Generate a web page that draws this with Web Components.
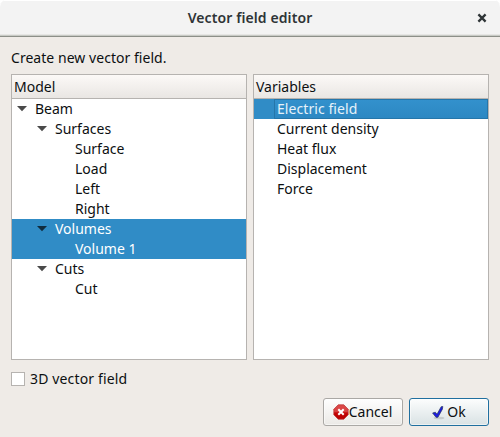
<!DOCTYPE html>
<html lang="en">
<head>
<meta charset="utf-8">
<title>Vector field editor</title>
<style>
html, body { margin: 0; height: 100%; background: #fff; overflow: hidden; }
body { font: 14px/20px "Noto Sans", sans-serif; color: #0c0f11; }
</style>
</head>
<body>
<field-dialog></field-dialog>
<script>
const define = (name, html) => customElements.define(name, class extends HTMLElement {
  constructor() {
    super();
    const t = document.createElement('template');
    t.innerHTML = html;
    this.attachShadow({ mode: 'open' }).append(t.content.cloneNode(true));
  }
});

define('title-bar', `
<style>
:host { display: grid; grid-template-columns: 36px 1fr 36px; align-items: center; height: 37px; box-sizing: border-box;
  border-bottom: 1px solid #8c8f88; border-radius: 7px 7px 0 0;
  background: radial-gradient(circle at 7px 7px, #0000 7px, #aaa 7.6px) 0 0 / 5px 5px no-repeat,
    radial-gradient(circle at -2px 7px, #0000 7px, #aaa 7.6px) 100% 0 / 5px 5px no-repeat,
    linear-gradient(#fff 0 1px, #f3f3f3 1px 34px, #e6e6e4 34px 35px, #c8cac5 35px);
  color: #2e3436; font-weight: 600; letter-spacing: .1px; }
h1 { font: inherit; margin: 0; grid-column: 2; text-align: center; }
svg { display: block; margin-left: 13px; }
</style>
<h1><slot></slot></h1>
<svg width="10" height="10" viewBox="0 0 10 10"><path d="M1.4 1.4 8.6 8.6M8.6 1.4 1.4 8.6" stroke="#2e3436" stroke-width="2.3"/></svg>`);

define('list-panel', `
<style>
:host { display: flex; flex-direction: column; box-sizing: border-box; border: 1px solid #b6b3b0; background: #fff; }
header { height: 23px; line-height: 24px; padding-left: 2px; border-bottom: 1px solid #b6b3b0; background: linear-gradient(#fcf9f7, #e9e6e3); }
</style>
<header><slot name="heading"></slot></header><slot></slot>`);

define('tree-row', `
<style>
:host { display: flex; align-items: center; height: 20px; box-sizing: border-box; padding-left: calc(3px + var(--depth, 0) * 20px); --arrow: #4a4a4a; }
:host([selected]) { background: #308cc6; color: #fff; --arrow: #102c3e; }
:host([focused]) { color: #e6f2fa; }
svg { width: 14px; height: 20px; flex: none; visibility: hidden; }
:host([open]) svg { visibility: visible; }
span { flex: 1; height: 20px; box-sizing: border-box; margin-left: 3px; padding-left: 3px; white-space: pre; }
:host([focused]) span { background: linear-gradient(#3391cd, #2c87c2); box-shadow: inset 0 0 0 1px #2576aa; letter-spacing: .07px; }
</style>
<svg viewBox="0 0 14 20"><path d="M2 7h10L7 12.2z" fill="var(--arrow)"/></svg><span><slot></slot></span>`);

define('check-option', `
<style>
:host { display: flex; align-items: center; gap: 5px; height: 20px; letter-spacing: .14px; }
i { width: 14px; height: 14px; box-sizing: border-box; border: 1px solid #b6b3b0; background: #fff; }
</style>
<i></i><span><slot></slot></span>`);

define('push-button', `
<style>
:host { display: flex; align-items: center; justify-content: center; width: 80px; height: 28px; box-sizing: border-box; padding-right: 1px;
  border: 1px solid #aaa8a5; border-radius: 3px; background: linear-gradient(#fefefe, #ebe9e6); box-shadow: inset 0 0 0 1px #ffffff80; }
:host([primary]) { border-color: #206f9f; background: linear-gradient(#fcfdfd, #d9e2e4); }
</style>
<slot name="icon"></slot><span><slot></slot></span>`);

define('cancel-icon', `
<style>:host, svg { display: block; width: 16px; height: 16px; }</style>
<svg viewBox="0 0 16 16"><defs><linearGradient id="g" x2="0" y2="1"><stop stop-color="#dc4a4a"/><stop offset=".48" stop-color="#d84040"/><stop offset=".56" stop-color="#c40404"/><stop offset="1" stop-color="#b80000"/></linearGradient></defs>
<path d="M5.2.8h5.6L15.2 5.2v5.6L10.8 15.2H5.2L.8 10.8V5.2z" fill="url(#g)" stroke="#b83030" stroke-width=".7" stroke-linejoin="round"/>
<path d="m5.3 5.3 5.4 5.4m0-5.4-5.4 5.4" stroke="#fff" stroke-width="2"/></svg>`);

define('ok-icon', `
<style>:host, svg { display: block; width: 16px; height: 16px; }</style>
<svg viewBox="0 0 16 16"><ellipse cx="8" cy="14" rx="5.4" ry="1.3" fill="#00000020"/>
<path d="M1.6 9 4.3 8.2 6 10.2 10.2 2.7 11.8 2.5 11.4 5.2 6.9 13.3H5z" fill="#1c1ce0" stroke="#25355f" stroke-width=".7" stroke-linejoin="round"/></svg>`);

define('field-dialog', `
<style>
:host { display: flex; flex-direction: column; height: 437px; background: linear-gradient(#fff 0 20px, #efebe7 20px); }
main { flex: 1; display: flex; flex-direction: column; padding: 11px 11px 11px; }
p { margin: 0 0 6px; height: 20px; letter-spacing: .04px; }
.lists { display: grid; grid-template-columns: 236px 236px; gap: 6px; height: 286px; }
check-option { margin-top: 9px; }
footer { display: flex; justify-content: flex-end; gap: 6px; margin-top: 9px; }
</style>
<title-bar>Vector field editor</title-bar>
<main>
<p>Create new vector field.</p>
<div class="lists">
<list-panel><span slot="heading">Model</span>
<tree-row open>Beam</tree-row>
<tree-row open style="--depth:1">Surfaces</tree-row>
<tree-row style="--depth:2">Surface</tree-row>
<tree-row style="--depth:2">Load</tree-row>
<tree-row style="--depth:2">Left</tree-row>
<tree-row style="--depth:2">Right</tree-row>
<tree-row open selected style="--depth:1">Volumes</tree-row>
<tree-row selected style="--depth:2">Volume 1</tree-row>
<tree-row open style="--depth:1">Cuts</tree-row>
<tree-row style="--depth:2">Cut</tree-row>
</list-panel>
<list-panel><span slot="heading">Variables</span>
<tree-row selected focused>Electric field</tree-row>
<tree-row>Current density</tree-row>
<tree-row>Heat flux</tree-row>
<tree-row>Displacement</tree-row>
<tree-row>Force</tree-row>
</list-panel>
</div>
<check-option>3D vector field</check-option>
<footer>
<push-button><cancel-icon slot="icon"></cancel-icon>Cancel</push-button>
<push-button primary><ok-icon slot="icon"></ok-icon>Ok</push-button>
</footer>
</main>`);
</script>
</body>
</html>
